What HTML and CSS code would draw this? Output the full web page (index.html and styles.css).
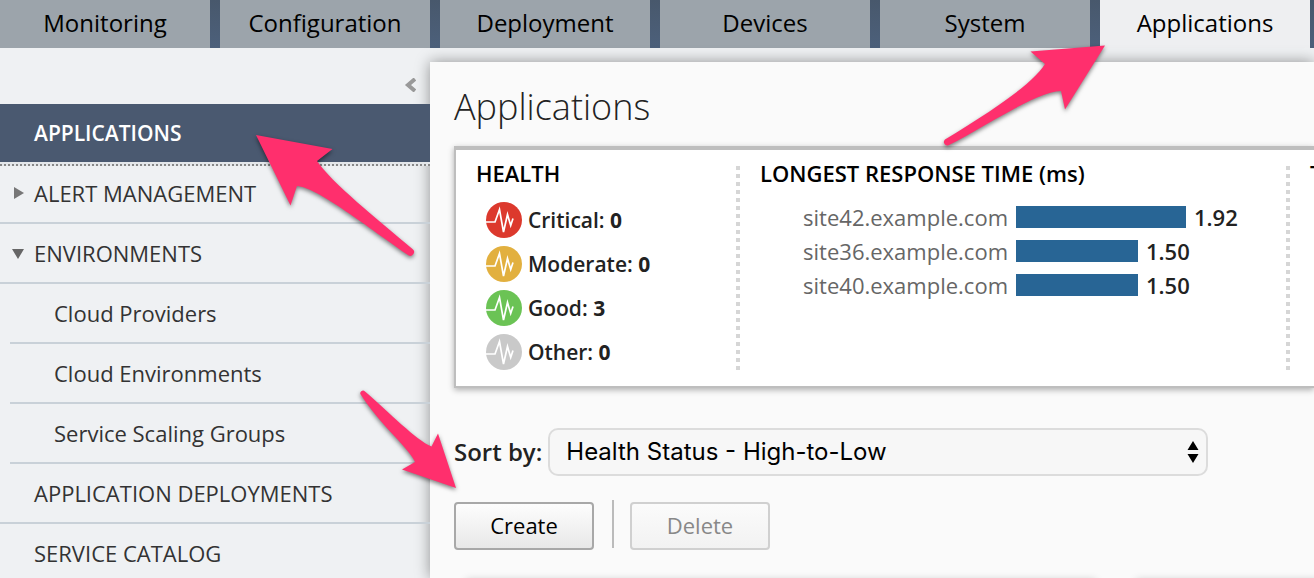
FILE: index.html
```html
<!DOCTYPE html>
<html lang="en">
<head>
<meta charset="utf-8">
<title>Applications</title>
<link rel="stylesheet" href="styles.css">
</head>
<body>
<svg class="defs" aria-hidden="true">
  <symbol id="pulse" viewBox="0 0 36 36">
    <circle cx="18" cy="18" r="18" fill="currentColor"/>
    <path d="M0 20H9L13.5 7.5L17.5 30L21.5 12.5L24.7 23.5L27 16.5" fill="none" stroke="#fff" stroke-width="1.7"/>
  </symbol>
</svg>
<nav class="tabs">
  <a class="tab" href="#monitoring">Monitoring</a>
  <a class="tab" href="#configuration">Configuration</a>
  <a class="tab" href="#deployment">Deployment</a>
  <a class="tab" href="#devices">Devices</a>
  <a class="tab" href="#system">System</a>
  <a class="tab tab-active" href="#applications">Applications</a>
</nav>
<div class="shell">
  <aside class="sidebar">
    <div class="collapse-row">
      <button class="collapse" aria-label="Collapse menu"><svg width="12" height="14" viewBox="0 0 12 14"><path d="M11 1L4 7L11 13" fill="none" stroke="#999" stroke-width="4"/></svg></button>
    </div>
    <nav class="menu">
      <a class="item item-active" href="#apps">APPLICATIONS</a>
      <a class="item" href="#alerts"><svg class="caret" width="12" height="14" viewBox="0 0 12 14"><path d="M2 1L12 7L2 13Z" fill="#777"/></svg>ALERT MANAGEMENT</a>
      <a class="item" href="#env"><svg class="caret" width="12" height="14" viewBox="0 0 12 14"><path d="M0 3H12L6 13Z" fill="#666"/></svg>ENVIRONMENTS</a>
      <a class="item item-sub" href="#providers">Cloud Providers</a>
      <a class="item item-sub" href="#cloud-env">Cloud Environments</a>
      <a class="item item-sub" href="#scaling">Service Scaling Groups</a>
      <a class="item" href="#deployments">APPLICATION DEPLOYMENTS</a>
      <a class="item" href="#catalog">SERVICE CATALOG</a>
    </nav>
  </aside>
  <main class="main">
    <h1 class="title">Applications</h1>
    <section class="summary">
      <div class="health">
        <h2 class="heading">HEALTH</h2>
        <ul class="statuses">
          <li class="status"><svg class="pulse critical"><use href="#pulse"/></svg><span>Critical: <b>0</b></span></li>
          <li class="status"><svg class="pulse moderate"><use href="#pulse"/></svg><span>Moderate: <b>0</b></span></li>
          <li class="status"><svg class="pulse good"><use href="#pulse"/></svg><span>Good: <b>3</b></span></li>
          <li class="status"><svg class="pulse other"><use href="#pulse"/></svg><span>Other: <b>0</b></span></li>
        </ul>
      </div>
      <div class="divider"></div>
      <div class="response">
        <h2 class="heading">LONGEST RESPONSE TIME (ms)</h2>
        <ul class="bars">
          <li class="bar-row"><span class="site">site42.example.com</span><span class="bar" style="width:170px"></span><b class="value">1.92</b></li>
          <li class="bar-row"><span class="site">site36.example.com</span><span class="bar" style="width:122px"></span><b class="value">1.50</b></li>
          <li class="bar-row"><span class="site">site40.example.com</span><span class="bar" style="width:122px"></span><b class="value">1.50</b></li>
        </ul>
      </div>
      <div class="divider"></div>
      <div class="next"><h2 class="heading">T</h2></div>
    </section>
    <div class="sort">
      <label class="sort-label" for="sort">Sort by:</label>
      <div class="select-wrap">
        <select class="select" id="sort"><option>Health Status - High-to-Low</option></select>
        <svg class="updown" width="12" height="22" viewBox="0 0 12 22"><path d="M6 0L11.500 9H.5ZM.5 13H11.500L6 22Z"/></svg>
      </div>
    </div>
    <div class="actions">
      <button class="button">Create</button>
      <span class="rule"></span>
      <button class="button" disabled>Delete</button>
    </div>
    <div class="cards"><div class="card"></div><div class="card"></div></div>
  </main>
</div>
<svg class="arrows" width="1314" height="578" viewBox="0 0 1314 578" aria-hidden="true">
  <path d="M256 135L332.500 149L317 161C331 182 377 219 412.500 249A3.500 3.500 0 0 1 408 255C370 229 317 187 297 186L290.500 205.500Z"/>
  <path d="M1105 45.500L1030.500 51.500L1045 64C1034 83 989 113 945 139.500A3.500 3.500 0 0 0 948 145.500C982 129 1035 92 1061 91L1065 109.500Z"/>
  <path d="M456 488L438 433.500L431.500 446.500C416 440 390 413 365 391.500A2.500 2.500 0 0 0 361 395C381 426 410 449 415 462L402 469.500Z"/>
</svg>
</body>
</html>
```
FILE: styles.css
```css
* { box-sizing: border-box; }
body {
  margin: 0;
  height: 100vh;
  overflow: hidden;
  display: flex;
  flex-direction: column;
  position: relative;
  background: #eff1f3;
  color: #222;
  font: 22px/30px "Open Sans", "Noto Sans", sans-serif;
}
h1, h2, ul { margin: 0; padding: 0; list-style: none; }
a { color: inherit; text-decoration: none; }
b { font-weight: 600; }
.defs { position: absolute; width: 0; height: 0; }

.tabs {
  flex: none;
  display: flex;
  gap: 10px;
  height: 48px;
  background: linear-gradient(#48586c, #4c607b);
}
.tab {
  flex: 0 0 210px;
  background: #9ca4ab;
  color: #000;
  font-size: 24px;
  line-height: 46px;
  text-align: center;
}
.tab-active { background: #eeeff1; }

.shell { flex: 1; display: flex; min-height: 0; }
.sidebar { flex: none; width: 430px; }
.collapse-row {
  display: flex;
  justify-content: flex-end;
  align-items: center;
  height: 56px;
  padding: 18px 14px 0 0;
}
.collapse { display: flex; padding: 0; border: 0; background: none; }
.item {
  display: flex;
  align-items: center;
  position: relative;
  height: 60px;
  padding-left: 34px;
  border-bottom: 2px solid #c9d1d8;
  color: #333;
}
.item-active {
  height: 62px;
  margin-bottom: -2px;
  padding-bottom: 2px;
  border-bottom: 2px dotted #888;
  background: linear-gradient(#4a5970 58px, #e4e7ea 58px) border-box;
  color: #fff;
  font-size: 21px;
  font-weight: 600;
}
.item-sub { margin-left: 10px; padding-left: 44px; }
.caret { position: absolute; left: 12px; }

.main {
  flex: 1;
  min-width: 0;
  margin-top: 14px;
  padding: 26px 0 0 24px;
  background: #fafafa;
  box-shadow: 0 0 14px rgba(0, 0, 0, .4);
  overflow: hidden;
  display: flex;
  flex-direction: column;
}
.title {
  color: #222;
  font-size: 36px;
  font-weight: 300;
  line-height: 38px;
}
.summary {
  flex: none;
  display: flex;
  margin-top: 20px;
  padding: 16px 0;
  border: solid #bebebe;
  border-width: 4px 0 2px 2px;
  background: #fff;
  box-shadow: 0 2px 6px rgba(0, 0, 0, .3);
  white-space: nowrap;
}
.heading { color: #000; font-size: 22px; font-weight: 600; line-height: 14px; }
.health { flex: none; width: 280px; padding-left: 20px; }
.statuses {
  display: flex;
  flex-direction: column;
  gap: 8px;
  margin-top: 22px;
  padding-left: 10px;
}
.status {
  display: flex;
  align-items: center;
  gap: 6px;
  height: 36px;
  font-size: 21px;
  font-weight: 600;
  line-height: 32px;
}
.status b { font-weight: 700; }
.pulse { width: 36px; height: 36px; }
.critical { color: #dc392d; }
.moderate { color: #e2b03f; }
.good { color: #6bc355; }
.other { color: #c9c9c9; }
.divider {
  flex: none;
  width: 4px;
  background: repeating-linear-gradient(#d6d6d6 0 4px, transparent 4px 8px);
}
.response { flex: none; width: 546px; padding-left: 20px; }
.bars { display: flex; flex-direction: column; gap: 12px; margin-top: 26px; }
.bar-row { display: flex; align-items: center; gap: 8px; height: 22px; }
.site { width: 248px; color: #666; text-align: right; }
.bar { height: 22px; background: #286595; }
.next { flex: none; padding-left: 20px; }

.sort { display: flex; align-items: center; gap: 6px; margin-top: 40px; }
.sort-label { font-size: 24px; font-weight: 600; }
.select-wrap { position: relative; flex: 0 1 660px; }
.select {
  appearance: none;
  display: block;
  width: 100%;
  height: 48px;
  padding: 0 40px 0 16px;
  border: 2px solid #dcdcdc;
  border-radius: 10px;
  background: #f7f7f7;
  color: #000;
  font: 24px/30px Inter, sans-serif;
}
.updown { position: absolute; right: 9px; top: 13px; pointer-events: none; }

.actions { display: flex; align-items: flex-end; gap: 16px; margin-top: 24px; }
.button {
  width: 140px;
  height: 48px;
  padding: 0 0 2px;
  border: 2px solid #a8a8a8;
  border-radius: 4px;
  background: linear-gradient(#fdfdfd, #e8e8e8);
  color: #000;
  font: 22px/30px "Open Sans", "Noto Sans", sans-serif;
}
.button:disabled {
  border-color: #d0d0d0;
  background: linear-gradient(#fbfbfb, #f2f2f2);
  color: #888;
}
.rule { width: 2px; height: 48px; margin: 0 0 2px 2px; background: #bbb; }
.cards { flex: none; display: flex; gap: 40px; margin-top: 30px; padding: 0 12px; }
.card { flex: none; width: 630px; height: 100px; background: #fff; box-shadow: 0 0 8px rgba(0, 0, 0, .2); }

.arrows {
  position: absolute;
  left: 0;
  top: 0;
  fill: #ff2f6d;
  filter: drop-shadow(0 2px 2px rgba(0, 0, 0, .5));
  pointer-events: none;
}
```
